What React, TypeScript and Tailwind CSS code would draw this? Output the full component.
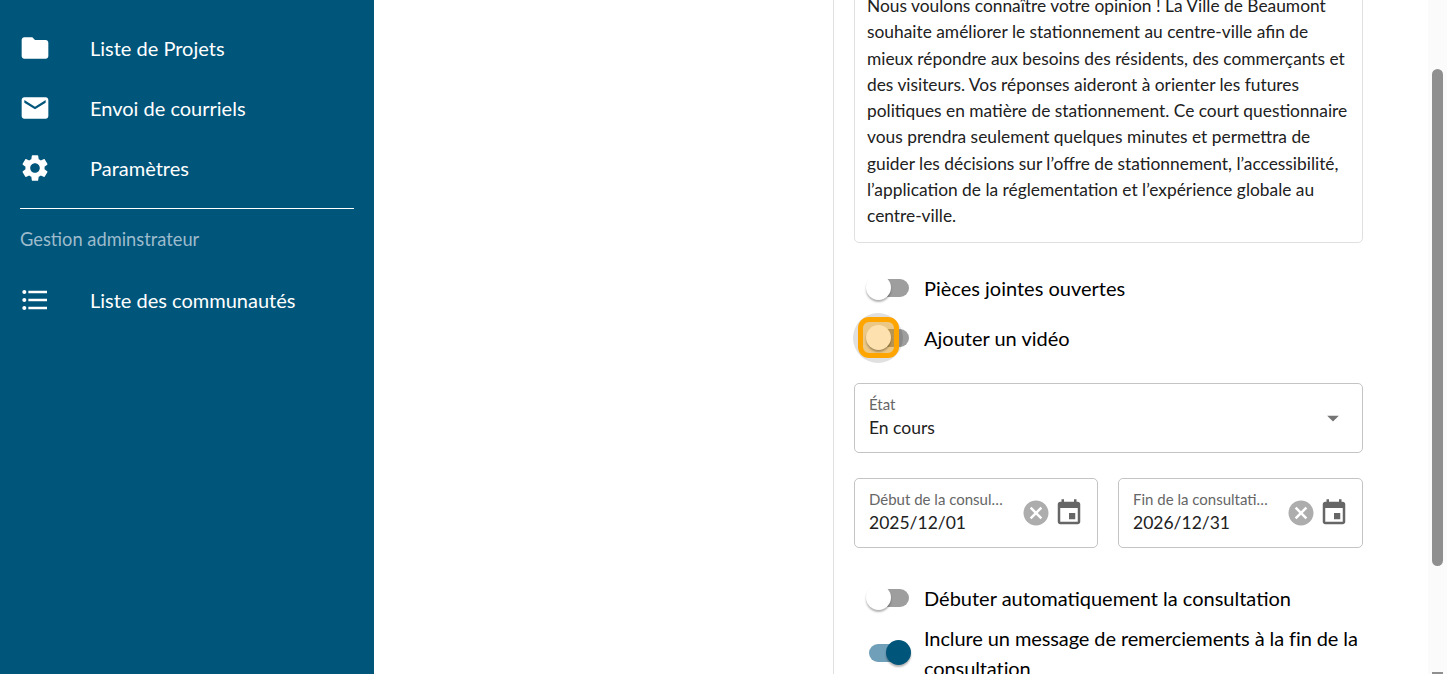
const Icon = ({ d, className }: { d: string; className: string }) => (
  <svg viewBox="0 0 24 24" fill="currentColor" className={className}>
    <path d={d} />
  </svg>
);

const folder = "M10 4H4c-1.1 0-1.99.9-1.99 2L2 18c0 1.1.9 2 2 2h16c1.1 0 2-.9 2-2V8c0-1.1-.9-2-2-2h-8l-2-2z";
const email = "M20 4H4c-1.1 0-1.99.9-1.99 2L2 18c0 1.1.9 2 2 2h16c1.1 0 2-.9 2-2V6c0-1.1-.9-2-2-2zm0 4l-8 5-8-5V6l8 5 8-5v2z";
const settings =
  "M19.14 12.94c.04-.3.06-.61.06-.94 0-.32-.02-.64-.07-.94l2.03-1.58c.18-.14.23-.41.12-.61l-1.92-3.32c-.12-.22-.37-.29-.59-.22l-2.39.96c-.5-.38-1.03-.7-1.62-.94l-.36-2.54c-.04-.24-.24-.41-.48-.41h-3.84c-.24 0-.43.17-.47.41l-.36 2.54c-.59.24-1.13.57-1.62.94l-2.39-.96c-.22-.08-.47 0-.59.22L2.74 8.87c-.12.21-.08.47.12.61l2.03 1.58c-.05.3-.09.63-.09.94s.02.64.07.94l-2.03 1.58c-.18.14-.23.41-.12.61l1.92 3.32c.12.22.37.29.59.22l2.39-.96c.5.38 1.03.7 1.62.94l.36 2.54c.05.24.24.41.48.41h3.84c.24 0 .44-.17.47-.41l.36-2.54c.59-.24 1.13-.56 1.62-.94l2.39.96c.22.08.47 0 .59-.22l1.92-3.32c.12-.22.07-.47-.12-.61l-2.01-1.58zM12 15.6c-1.98 0-3.6-1.62-3.6-3.6s1.62-3.6 3.6-3.6 3.6 1.62 3.6 3.6-1.62 3.6-3.6 3.6z";
const list =
  "M4 10.5c-.83 0-1.5.67-1.5 1.5s.67 1.5 1.5 1.5 1.5-.67 1.5-1.5-.67-1.5-1.5-1.5zm0-6c-.83 0-1.5.67-1.5 1.5S3.17 7.5 4 7.5 5.5 6.83 5.5 6 4.83 4.5 4 4.5zm0 12c-.83 0-1.5.68-1.5 1.5s.68 1.5 1.5 1.5 1.5-.68 1.5-1.5-.67-1.5-1.5-1.5zM7 19h14v-2H7v2zm0-6h14v-2H7v2zm0-8v2h14V5H7z";
const cancel =
  "M12 2C6.47 2 2 6.47 2 12s4.47 10 10 10 10-4.47 10-10S17.53 2 12 2zm5 13.59L15.59 17 12 13.41 8.41 17 7 15.59 10.59 12 7 8.41 8.41 7 12 10.59 15.59 7 17 8.41 13.41 12 17 15.59z";
const event =
  "M17 12h-5v5h5v-5zM16 1v2H8V1H6v2H5c-1.11 0-1.99.9-1.99 2L3 19c0 1.1.89 2 2 2h14c1.1 0 2-.9 2-2V5c0-1.1-.9-2-2-2h-1V1h-2zm3 18H5V8h14v11z";

const NavItem = ({ icon, label }: { icon: string; label: string }) => (
  <div className="flex h-[60px] items-center pl-[19px] text-white">
    <Icon d={icon} className="h-8 w-8 shrink-0" />
    <span className="ml-[39px] text-[20px]">{label}</span>
  </div>
);

const Toggle = ({ on, focused, label, labelClass = "" }: { on?: boolean; focused?: boolean; label: string; labelClass?: string }) => (
  <div className="flex items-center">
    <div className="relative ml-[15px] h-[18px] w-10 shrink-0">
      <div className={`h-full w-full rounded-full ${on ? "bg-[#6f9fb9]" : "bg-[#9e9e9e]"}`} />
      {focused && <div className="absolute -left-[16px] -top-[16px] h-[50px] w-[50px] rounded-full bg-black/12" />}
      {focused && <div className="absolute -left-[11px] -top-[12px] h-[41px] w-[41px] rounded-[11px] border-[5px] border-[#ffa500] bg-[#ffa500]/40" />}
      <div
        className={`absolute top-[-4px] h-[25px] w-[25px] rounded-full shadow-[0_2px_2px_rgba(0,0,0,0.3)] ${
          on ? "left-[17px] bg-[#00557a]" : focused ? "-left-[3px] bg-[#fde1ae]" : "-left-[3px] bg-white"
        }`}
      />
    </div>
    <span className={`ml-[15px] text-[20px] leading-[30px] text-black ${labelClass}`}>{label}</span>
  </div>
);

const DateField = ({ label, value, className }: { label: string; value: string; className: string }) => (
  <div className={`flex h-[70px] min-w-0 items-center rounded-[5px] border border-[#c4c4c4] pl-[14px] pr-[13px] ${className}`}>
    <div className="min-w-0 flex-1 pb-[2px]">
      <div className="truncate text-[15px] leading-[20px] text-[#666666]">{label}</div>
      <div className="text-[17.5px] leading-[27px] text-[#212121]">{value}</div>
    </div>
    <Icon d={cancel} className="ml-[14px] mr-[3px] h-[30px] w-[30px] shrink-0 text-[#adadad]" />
    <Icon d={event} className="h-[30px] w-[30px] shrink-0 text-[#666666]" />
  </div>
);

export default function App() {
  return (
    <div className="flex h-[674px] overflow-hidden bg-white font-['Lato','Liberation_Sans',sans-serif]">
      {/* Sidebar */}
      <aside className="w-[374px] shrink-0 bg-[#00557a] pt-[18px]">
        <NavItem icon={folder} label="Liste de Projets" />
        <NavItem icon={email} label="Envoi de courriels" />
        <NavItem icon={settings} label="Paramètres" />
        <div className="mx-5 mt-[10px] border-t border-white" />
        <div className="ml-5 mt-[19px] text-[18.3px] leading-[22px] text-[#9dbbcc]">Gestion adminstrateur</div>
        <div className="mt-[20px]">
          <NavItem icon={list} label="Liste des communautés" />
        </div>
      </aside>

      <div className="flex-1" />

      {/* Form panel */}
      <section className="w-[595px] shrink-0 border-l border-[#e0e0e0] pl-5 pr-[65px]">
        <div className="-mt-[8px] rounded-[5px] border border-[#e0e0e0] px-[12px] pb-[13px] text-[17.35px] leading-[26.25px] text-[#212121]">
          Nous voulons connaître votre opinion ! La Ville de Beaumont souhaite améliorer le stationnement au centre-ville afin de mieux répondre aux besoins des résidents, des commerçants et des visiteurs. Vos réponses aideront à orienter les futures politiques en matière de stationnement. Ce court questionnaire vous prendra seulement quelques minutes et permettra de guider les décisions sur l’offre de stationnement, l’accessibilité, l’application de la réglementation et l’expérience globale au centre-ville.
        </div>
        <div className="mt-[30px] flex flex-col gap-5">
          <Toggle label="Pièces jointes ouvertes" />
          <Toggle focused label="Ajouter un vidéo" />
        </div>
        <div className="mt-[30px] flex h-[70px] items-center rounded-[5px] border border-[#c4c4c4] pl-[14px] pr-[15px]">
          <div className="flex-1 pb-[2px]">
            <div className="text-[15px] leading-[20px] text-[#666666]">État</div>
            <div className="text-[17.5px] leading-[27px] text-[#212121]">En cours</div>
          </div>
          <Icon d="M7 10l5 5 5-5z" className="h-7 w-7 text-[#757575]" />
        </div>
        <div className="mt-[25px] flex gap-5">
          <DateField className="w-[244px]" label="Début de la consultation" value="2025/12/01" />
          <DateField className="flex-1" label="Fin de la consultation" value="2026/12/31" />
        </div>
        <div className="mt-[35px] flex flex-col gap-[10px]">
          <Toggle label="Débuter automatiquement la consultation" />
          <Toggle on labelClass="tracking-[-0.1px]" label="Inclure un message de remerciements à la fin de la consultation" />
        </div>
      </section>

      {/* Scrollbar */}
      <div className="relative w-[19px] shrink-0 bg-[#fbfbfb]">
        <div className="absolute left-[4px] top-[69px] h-[497px] w-[11px] rounded-full bg-[#8f8f8f]" />
        <div className="absolute bottom-0 left-[4px] h-[2px] w-[11px] bg-[#8f8f8f]" />
      </div>
    </div>
  );
}
